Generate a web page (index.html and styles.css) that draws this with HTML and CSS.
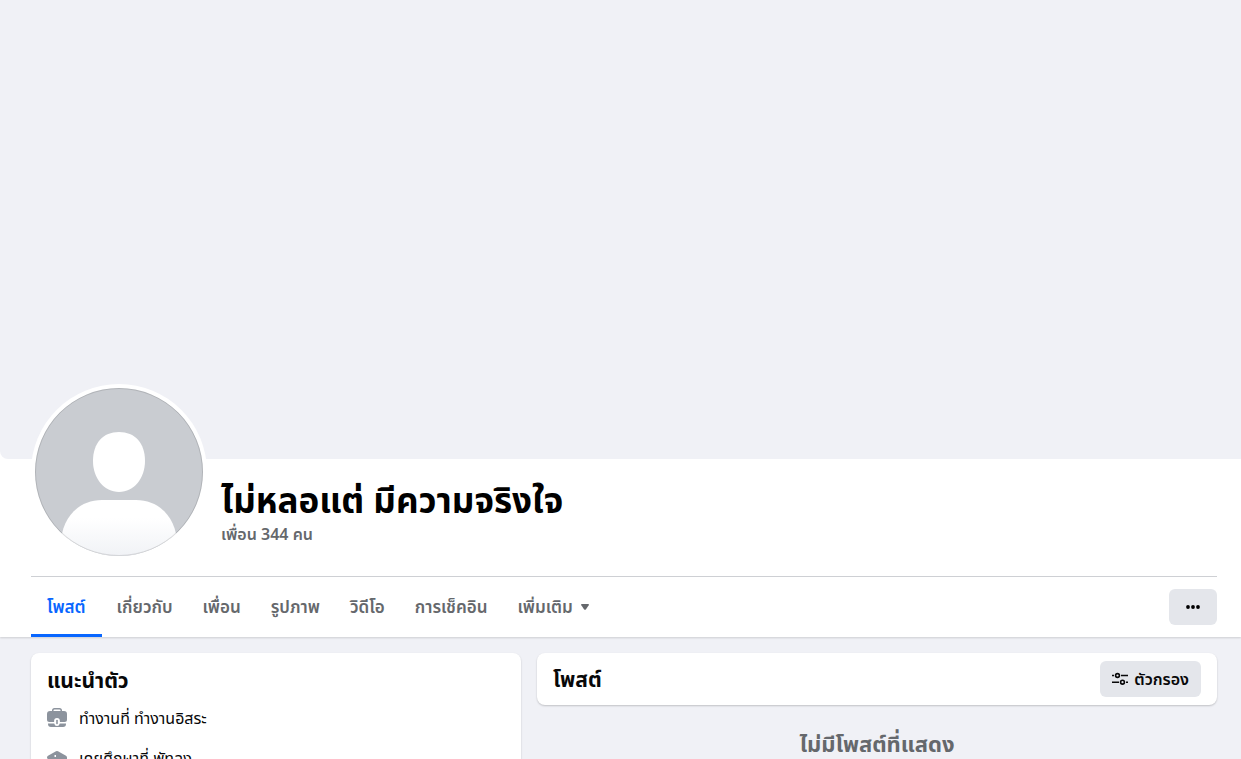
FILE: index.html
```html
<!DOCTYPE html>
<html lang="th">
<head>
    <meta charset="UTF-8">
    <meta name="viewport" content="width=device-width, initial-scale=1.0">
    <title>ไม่หลอแต่ มีความจริงใจ</title>
    <link rel="stylesheet" href="styles.css">
</head>
<body>
    <header class="profile">
        <div class="cover"></div>
        <div class="inner">
            <div class="identity">
                <svg class="avatar" viewBox="0 0 176 176" role="img" aria-label="รูปโปรไฟล์">
                    <defs>
                        <linearGradient id="shade" x1="0" y1="0" x2="0" y2="1">
                            <stop offset="0.3" stop-color="#fff"/>
                            <stop offset="1" stop-color="#eff1f5"/>
                        </linearGradient>
                        <clipPath id="round"><circle cx="88" cy="88" r="84"/></clipPath>
                    </defs>
                    <circle cx="88" cy="88" r="88" fill="#fff"/>
                    <g clip-path="url(#round)">
                        <rect width="176" height="176" fill="#c9ccd1"/>
                        <path d="M88 48c16 0 26 11 26 29 0 17-11 31-26 31S62 94 62 77c0-18 10-29 26-29z" fill="#fff"/>
                        <path d="M30 160c0-24 16-44 41-44h34c25 0 41 20 41 44v16H30z" fill="url(#shade)"/>
                    </g>
                    <circle cx="88" cy="88" r="83.5" fill="none" stroke="#000" stroke-opacity="0.12"/>
                </svg>
                <div class="name">
                    <h1>ไม่หลอแต่ มีความจริงใจ</h1>
                    <a class="friends" href="#friends">เพื่อน 344 คน</a>
                </div>
            </div>
            <div class="bar">
                <nav class="tabs">
                    <a class="tab active" href="#posts">โพสต์</a>
                    <a class="tab" href="#about">เกี่ยวกับ</a>
                    <a class="tab" href="#friends">เพื่อน</a>
                    <a class="tab" href="#photos">รูปภาพ</a>
                    <a class="tab" href="#videos">วิดีโอ</a>
                    <a class="tab" href="#checkins">การเช็คอิน</a>
                    <button class="tab" type="button">เพิ่มเติม
                        <svg width="8" height="6" viewBox="0 0 8 6"><path d="M1 0h6q1.500 0 .7 1.200L5 5.200q-1 1.100-2 0L.3 1.200Q-.5 0 1 0z" fill="currentColor"/></svg>
                    </button>
                </nav>
                <button class="btn more" type="button" aria-label="ตัวเลือกเพิ่มเติม">
                    <svg width="14" height="4" viewBox="0 0 14 4"><circle cx="2" cy="2" r="1.900"/><circle cx="7" cy="2" r="1.900"/><circle cx="12" cy="2" r="1.900"/></svg>
                </button>
            </div>
        </div>
    </header>

    <main class="content">
        <section class="card intro">
            <h2>แนะนำตัว</h2>
            <ul>
                <li>
                    <svg width="20" height="20" viewBox="0 0 20 20" fill="#8c939d">
                        <path d="M5 3V2.500Q5 0 7.500 0h5Q15 0 15 2.500V3h2q3 0 3 3v5.500q0 2.500-2.500 2.500h-4.600v-1q0-3-2.900-3t-2.900 3v1H2.500Q0 14 0 11.500V6q0-3 3-3zM6.500 3h7v-.5q0-1-1-1h-5q-1 0-1 1z" fill-rule="evenodd"/>
                        <path d="M1 15.500h6.200q.6 2.500 2.800 2.500t2.800-2.500H19v.5q0 3-3 3H4q-3 0-3-3z"/>
                        <rect x="9.200" y="11.800" width="1.600" height="4.400" rx="0.800"/>
                    </svg>
                    <span>ทำงานที่ ทำงานอิสระ</span>
                </li>
                <li>
                    <svg width="20" height="20" viewBox="0 0 20 20" fill="#8c939d">
                        <path d="M9 3.300q1-.6 2 0l8 4.400q1 .6 1 1.700v8h-2V12l-7 3.500q-1 .5-2 0L1 11Q0 10.400 0 9.400t1-1.700zM7.500 7v2h1.500v-2zM4 14.500l5 2.500q1 .5 2 0l5-2.500v3q-6 3-12 0z" fill-rule="evenodd"/>
                    </svg>
                    <span>เคยศึกษาที่ พัทลุง</span>
                </li>
            </ul>
        </section>
        <div class="feed">
            <section class="card posts">
                <h2>โพสต์</h2>
                <button class="btn filter" type="button">
                    <svg width="16" height="16" viewBox="0 0 16 16" fill="none" stroke="currentColor" stroke-width="1.600">
                        <path d="M0 4.500h2M9 4.500h7M0 11.200h7M14 11.200h2"/>
                        <circle cx="5.500" cy="4.500" r="1.900"/>
                        <circle cx="10.500" cy="11.200" r="1.900"/>
                    </svg>
                    ตัวกรอง
                </button>
            </section>
            <p class="empty">ไม่มีโพสต์ที่แสดง</p>
        </div>
    </main>
</body>
</html>
```
FILE: styles.css
```css
* {
    box-sizing: border-box;
}
body {
    margin: 0;
    height: 100vh;
    overflow: hidden;
    background-color: #f0f1f6;
    color: #080809;
    font-family: "Noto Sans", "Noto Sans Thai", sans-serif;
    font-size: 16px;
    line-height: 20px;
}
h1, h2, p, ul {
    margin: 0;
    padding: 0;
}
a {
    text-decoration: none;
}
button {
    border: none;
    font: inherit;
    cursor: pointer;
}
.profile {
    background-color: #fff;
    box-shadow: 0 1px 2px rgba(0, 0, 0, 0.15);
}
.cover {
    height: 459px;
    background-color: #f0f1f6;
    border-radius: 0 0 0 8px;
}
.inner {
    padding: 0 24px 0 31px;
}
.identity {
    display: flex;
    align-items: flex-end;
    gap: 14px;
    margin-top: -75px;
    padding-bottom: 16px;
    border-bottom: 1px solid #ced0d4;
}
.avatar {
    width: 176px;
    height: 176px;
}
.name {
    padding-bottom: 16px;
}
h1 {
    padding-bottom: 4px;
    font-size: 35px;
    line-height: 40px;
    color: #000;
}
.friends {
    display: block;
    font-weight: 600;
    color: #65686c;
}
.bar {
    display: flex;
    align-items: center;
    justify-content: space-between;
}
.tabs {
    display: flex;
}
.tab {
    display: flex;
    align-items: center;
    gap: 8px;
    height: 60px;
    padding: 0 15px;
    background: none;
    border-bottom: 3px solid transparent;
    border-top: 3px solid transparent;
    color: #65686c;
    font-size: 17px;
    font-weight: 600;
}
.tab.active {
    padding: 0 16px;
    color: #0866ff;
    border-bottom-color: #0866ff;
}
.btn {
    display: flex;
    align-items: center;
    justify-content: center;
    gap: 6px;
    height: 36px;
    padding: 0 12px;
    border-radius: 6px;
    background-color: #e4e6eb;
    color: #080809;
    font-weight: 600;
}
.more {
    width: 48px;
}
.content {
    display: grid;
    grid-template-columns: 490fr 680fr;
    align-items: start;
    gap: 16px;
    padding: 16px 24px 0 31px;
}
.card {
    background-color: #fff;
    border-radius: 8px;
    box-shadow: 0 1px 2px rgba(0, 0, 0, 0.2);
}
h2 {
    font-size: 21px;
    font-weight: 700;
    line-height: 24px;
}
.intro {
    padding: 15px 16px;
}
.intro ul {
    display: grid;
    gap: 20px;
    padding-top: 16px;
    list-style: none;
}
.intro li {
    display: flex;
    align-items: center;
    gap: 12px;
}
.posts {
    display: flex;
    align-items: center;
    justify-content: space-between;
    padding: 8px 16px;
}
.empty {
    padding-top: 26px;
    color: #65686c;
    font-size: 22px;
    font-weight: 700;
    line-height: 24px;
    text-align: center;
}
```
